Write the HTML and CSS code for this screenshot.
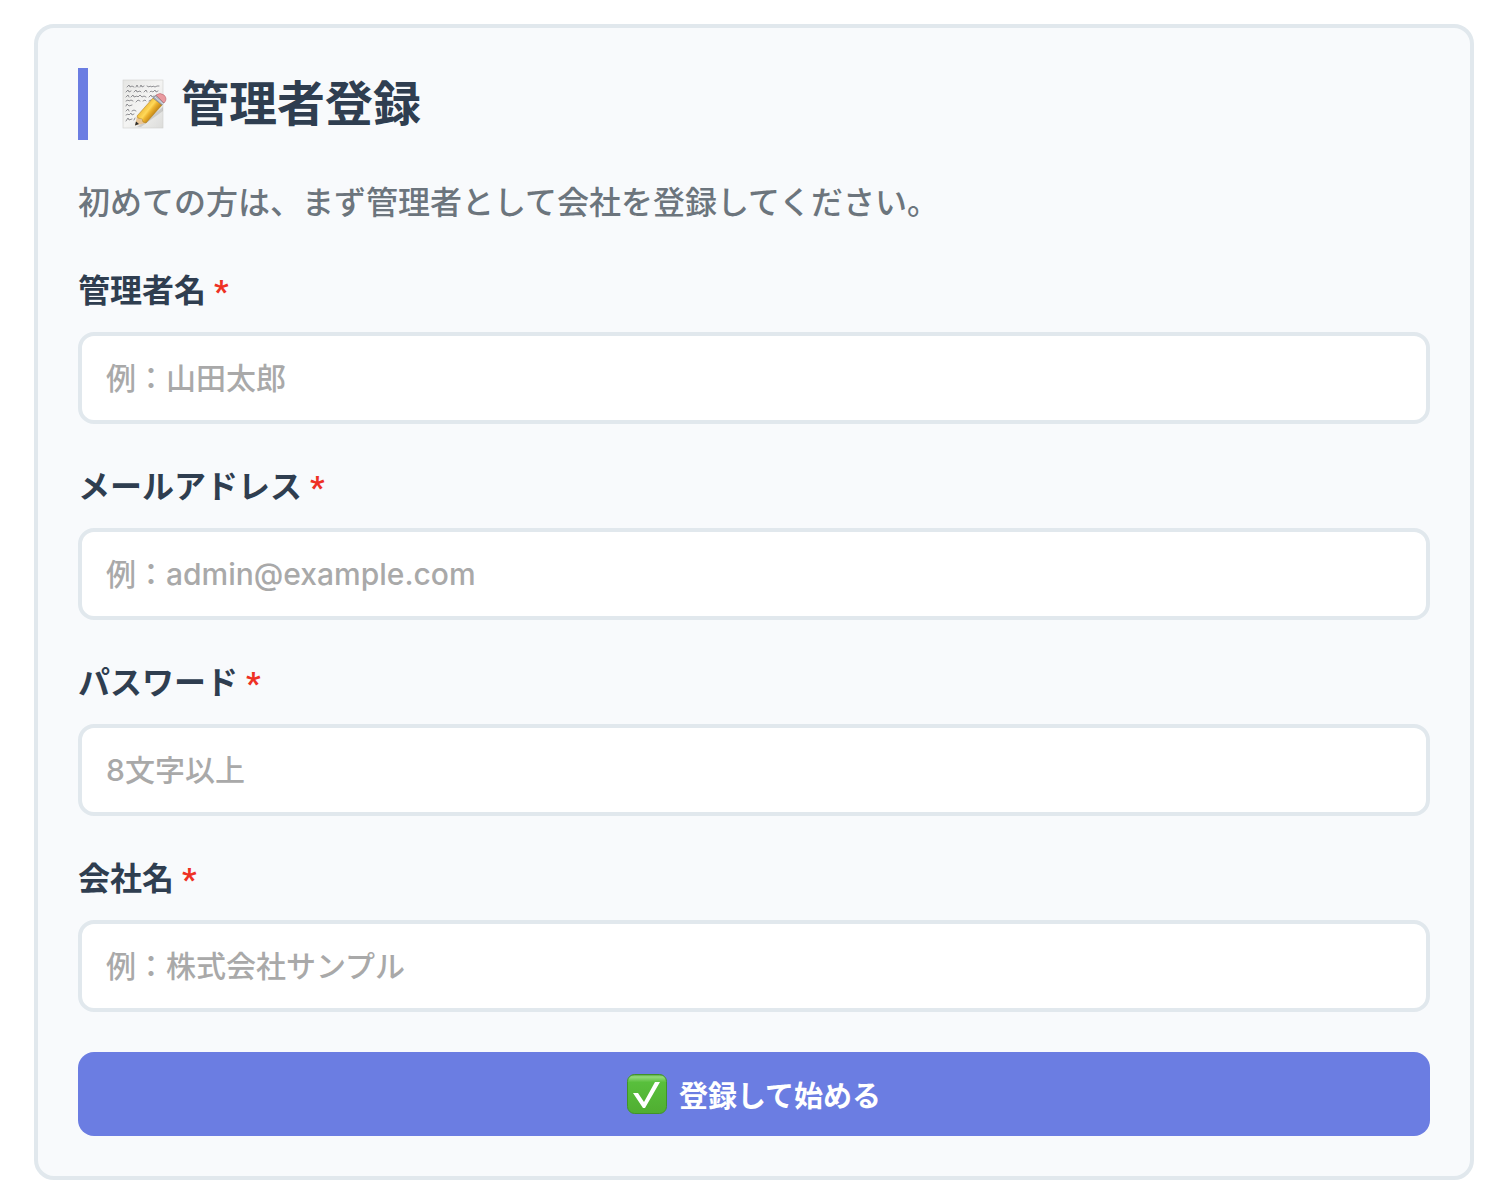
FILE: index.html
```html
<!DOCTYPE html>
<html lang="ja">
<head>
    <meta charset="UTF-8">
    <meta name="viewport" content="width=device-width, initial-scale=1.0">
    <title>管理者登録</title>
    <link rel="stylesheet" href="styles.css">
</head>
<body>
    <main class="card">
        <h1 class="card-title">
            <svg class="memo-icon" viewBox="0 0 50 50" aria-hidden="true">
                <defs>
                    <linearGradient id="paper" x1="0" y1="0" x2="1" y2="1">
                        <stop offset="0" stop-color="#e6e6e4"/>
                        <stop offset="0.5" stop-color="#f4f4f3"/>
                        <stop offset="1" stop-color="#dcdcda"/>
                    </linearGradient>
                    <linearGradient id="pencil" gradientUnits="userSpaceOnUse" x1="26" y1="28" x2="36" y2="36">
                        <stop offset="0" stop-color="#f0bd3c"/>
                        <stop offset="0.4" stop-color="#ffd95a"/>
                        <stop offset="0.6" stop-color="#eeb42f"/>
                        <stop offset="1" stop-color="#c08316"/>
                    </linearGradient>
                </defs>
                <rect x="5" y="1" width="40" height="48" fill="url(#paper)" stroke="#d0d0ce" stroke-width="0.6"/>
                <g fill="none" stroke="#77777c" stroke-width="0.8" stroke-linecap="round">
                    <path d="M9 8l2-2 1 2 2-1 2 1M18 8l1-2 1 2M22 8l1-2 1 2 2-1M29 7l2 1 1-1 2 1 1-1 2 1 2-1h2"/>
                    <path d="M8 13l2-2 1 2 2-1M16 13l2-2 1 2 3-1 1 1M26 13l2-2 1 2M32 13l1-1 2 1 2-2 1 2 2-1"/>
                    <path d="M8 18l2-2 1 2M13 18l2-2 1 2 3-1 1 1 2-2 2 2 2-1 2 1M31 18l2-2 1 2 2-1"/>
                    <path d="M8 22l2-1 1 1 2-1 2 1M18 23l2-2 2 1M25 22l2-1 1 1M31 22l2-1"/>
                    <path d="M8 27l1-2 2 2 3-1M8 32l2-2 1 2M14 32l2-1 2 1M8 36l2-1 1 1 2-2 1 2 2-1M8 42l2-3 1 2 3-1M16 41l1-2"/>
                </g>
                <path d="M19 48l26-20v4L23 48z" fill="#000" opacity="0.12"/>
                <path d="M17 46.500l2-9.500 9 7z" fill="#e8c596"/>
                <path d="M17 46.500l1-4 3 2.500z" fill="#2b2b2b"/>
                <path d="M19 37L35 19l9 7-16 18-3-1-1-3-4-1z" fill="url(#pencil)" stroke="#a87816" stroke-width="0.5"/>
                <path d="M35 19l3-3 8 7-2 3z" fill="#a9adb8" stroke="#777c88" stroke-width="0.6"/>
                <path d="M37 18l8 7" stroke="#dde0e6" stroke-width="1"/>
                <path d="M38 16q4-3 8 0 4 4 0 8z" fill="#e99aa0" stroke="#b9646c" stroke-width="0.6"/>
            </svg>
            管理者登録
        </h1>
        <p class="lead">初めての方は、まず管理者として会社を登録してください。</p>

        <form id="registerForm">
            <div class="form-group">
                <label for="adminName">管理者名 <span class="required">*</span></label>
                <input type="text" id="adminName" placeholder="例：山田太郎" required>
            </div>
            <div class="form-group">
                <label for="email">メールアドレス <span class="required">*</span></label>
                <input type="email" id="email" placeholder="例：admin@example.com" required>
            </div>
            <div class="form-group">
                <label for="password">パスワード <span class="required">*</span></label>
                <input type="password" id="password" placeholder="8文字以上" required>
            </div>
            <div class="form-group">
                <label for="companyName">会社名 <span class="required">*</span></label>
                <input type="text" id="companyName" placeholder="例：株式会社サンプル" required>
            </div>
            <button type="submit" class="btn">
                <svg class="check-icon" viewBox="0 0 40 40" aria-hidden="true">
                    <defs>
                        <linearGradient id="green" x1="0" y1="0" x2="0" y2="1">
                            <stop offset="0" stop-color="#4fa538"/>
                            <stop offset="0.06" stop-color="#93da7c"/>
                            <stop offset="0.2" stop-color="#58bf3c"/>
                            <stop offset="1" stop-color="#50ae31"/>
                        </linearGradient>
                    </defs>
                    <rect x="0.500" y="0.500" width="39" height="39" rx="7" fill="url(#green)" stroke="#419329"/>
                    <path d="M6 19h5l6 9L28 8h5L18 34h-2z" fill="#fff"/>
                </svg>
                登録して始める
            </button>
        </form>
    </main>
</body>
</html>
```

FILE: styles.css
```css
* {
    box-sizing: border-box;
}

body {
    font-family: Inter, "Noto Sans CJK JP", sans-serif;
    margin: 0;
    padding: 24px 36px 18px 34px;
    background-color: #fff;
    color: #2f3e50;
}

.card {
    background-color: #f8fafc;
    border: 4px solid #e1e8ed;
    border-radius: 20px;
    padding: 40px;
}

.card-title {
    display: flex;
    align-items: center;
    gap: 13px;
    margin: 0 0 40px;
    padding-left: 30px;
    border-left: 10px solid #6b7de2;
    font-size: 48px;
    line-height: 72px;
}

.memo-icon {
    width: 50px;
    height: 50px;
}

.lead {
    margin: 0 0 40px;
    color: #6c757d;
    font-size: 32px;
    font-weight: 500;
    line-height: 46px;
}

.form-group {
    margin-bottom: 38px;
}

.form-group label {
    display: block;
    margin-bottom: 16px;
    font-size: 32px;
    font-weight: 600;
    line-height: 50px;
}

.required {
    color: #ee3124;
    font-family: Roboto, sans-serif;
    font-weight: 700;
}

.form-group input {
    display: block;
    width: 100%;
    height: 92px;
    padding: 0 24px;
    border: 4px solid #e1e8ed;
    border-radius: 16px;
    background-color: #fff;
    color: #2f3e50;
    font-family: inherit;
    font-size: 30px;
    font-weight: 500;
}

.form-group input::placeholder {
    color: #a9a9a9;
}

.btn {
    display: flex;
    align-items: center;
    justify-content: center;
    gap: 12px;
    width: 100%;
    height: 84px;
    margin-top: 40px;
    border: none;
    border-radius: 16px;
    background-color: #6b7de2;
    color: #fff;
    font-family: inherit;
    font-size: 29px;
    font-weight: 600;
    cursor: pointer;
}

.check-icon {
    width: 40px;
    height: 40px;
}
```
